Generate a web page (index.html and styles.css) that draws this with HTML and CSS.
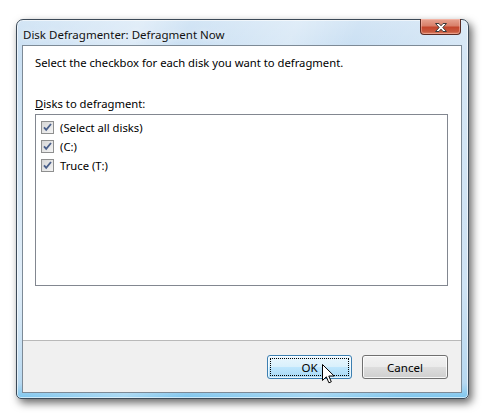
FILE: index.html
```html
<!DOCTYPE html>
<html>
<head>
<meta charset="utf-8">
<link rel="stylesheet" href="styles.css">
</head>
<body>
<div class="window">
  <div class="titlebar">
    <div class="title">Disk Defragmenter: Defragment Now</div>
    <div class="close">
      <svg width="18" height="11" viewBox="0 0 18 11">
        <path d="M3.5 1.5h3.5l2 2.3 2-2.3h3.5l-3.7 4 3.7 4h-3.5l-2-2.3-2 2.3h-3.5l3.7-4z" fill="#fff" stroke="#3b3b3b" stroke-width="1" stroke-linejoin="round"/>
      </svg>
    </div>
  </div>
  <div class="client">
    <div class="content">
      <div class="instr">Select the checkbox for each disk you want to defragment.</div>
      <div class="label"><u>D</u>isks to defragment:</div>
      <div class="list">
        <div class="row"><span class="cb"><svg width="13" height="13" viewBox="0 0 13 13"><path d="M3 6.3l2.2 2.6L10 3" fill="none" stroke="#4a5f8a" stroke-width="1.8"/></svg></span>(Select all disks)</div>
        <div class="row"><span class="cb"><svg width="13" height="13" viewBox="0 0 13 13"><path d="M3 6.3l2.2 2.6L10 3" fill="none" stroke="#4a5f8a" stroke-width="1.8"/></svg></span>(C:)</div>
        <div class="row"><span class="cb"><svg width="13" height="13" viewBox="0 0 13 13"><path d="M3 6.3l2.2 2.6L10 3" fill="none" stroke="#4a5f8a" stroke-width="1.8"/></svg></span>Truce (T:)</div>
      </div>
    </div>
    <div class="footer">
      <div class="btn ok"><span class="focus">OK</span></div>
      <div class="btn">Cancel</div>
    </div>
  </div>
  <svg class="cursor" width="14" height="22" viewBox="0 0 14 22">
    <path d="M0.5 0.5v16l3.8-3.7 2.6 6 2.4-1-2.5-5.8h5.3z" fill="#fff" stroke="#000" stroke-width="1" stroke-linejoin="round"/>
  </svg>
</div>
</body>
</html>
```
FILE: styles.css
```css
html, body {
  margin: 0;
  padding: 0;
  background: #fff;
}
body {
  width: 486px;
  height: 419px;
  overflow: hidden;
  font-family: "Noto Sans", "Open Sans", sans-serif;
  font-size: 11.25px;
  color: #000;
}
.window {
  position: relative;
  margin: 19px 0 0 16px;
  width: 453px;
  height: 380px;
  box-sizing: border-box;
  padding: 0 6px 5px 5px;
  border: 1px solid #3c4a58;
  border-radius: 7px 7px 5px 5px;
  background:
    linear-gradient(115deg, rgba(255,255,255,0) 0%, rgba(255,255,255,.35) 20%, rgba(255,255,255,0) 28%, rgba(255,255,255,.3) 45%, rgba(255,255,255,0) 55%, rgba(255,255,255,.25) 75%, rgba(255,255,255,0) 90%),
    linear-gradient(180deg, #d3e5f5 0%, #c7def2 10%, #cfe3f4 70%, #b7d8f0 96%, #7cc6ee 100%);
  box-shadow: 3px 4px 9px rgba(0,0,0,.6), inset 0 0 0 1px rgba(255,255,255,.6);
  display: flex;
  flex-direction: column;
}
.titlebar {
  height: 25px;
  flex: none;
  display: flex;
  justify-content: space-between;
  align-items: flex-start;
}
.title {
  padding: 7px 0 0 1px;
  line-height: 15px;
  font-size: 11.5px;
  color: #111;
  text-shadow: 0 0 6px rgba(255,255,255,.9);
}
.close {
  width: 41px;
  height: 16px;
  margin: -1px 1px 0 0;
  box-sizing: border-box;
  border: 1px solid #5a2a22;
  border-top: none;
  border-radius: 0 0 4px 4px;
  background: linear-gradient(180deg, #e8a592 0%, #d8806a 45%, #c4462c 55%, #c85a3f 85%, #e08a6a 100%);
  box-shadow: inset 0 0 0 1px rgba(255,200,190,.45);
  display: flex;
  align-items: center;
  justify-content: center;
}
.close svg { display: block; margin-top: 1px; }
.client {
  flex: 1;
  border: 1px solid #7d8a96;
  background: #fff;
  display: flex;
  flex-direction: column;
}
.content {
  flex: 1;
  padding: 9px 0 0 12px;
  display: flex;
  flex-direction: column;
}
.instr { line-height: 15px; }
.label { margin-top: 26px; line-height: 15px; }
.list {
  margin-top: 3px;
  width: 413px;
  height: 172px;
  box-sizing: border-box;
  border: 1px solid #828790;
  padding: 3px 0 0 5px;
}
.row {
  height: 19px;
  display: flex;
  align-items: center;
  gap: 6px;
  line-height: 15px;
}
.cb {
  width: 13px;
  height: 13px;
  box-sizing: border-box;
  border: 1px solid #8e8f8f;
  background: linear-gradient(135deg, #d6d6d6 0%, #f4f4f4 100%);
  position: relative;
  flex: none;
}
.cb svg { position: absolute; left: -1px; top: -1px; }
.footer {
  height: 52px;
  flex: none;
  border-top: 1px solid #b9b9b9;
  background: #f0f0f0;
  display: flex;
  justify-content: flex-end;
  align-items: flex-start;
  gap: 10px;
  padding: 14px 13px 0 0;
  box-sizing: border-box;
}
.btn {
  width: 86px;
  height: 24px;
  box-sizing: border-box;
  border: 1px solid #707070;
  border-radius: 3px;
  background: linear-gradient(180deg, #f2f2f2 0%, #ebebeb 48%, #dddddd 52%, #cfcfcf 100%);
  box-shadow: inset 0 0 0 1px rgba(255,255,255,.8);
  display: flex;
  align-items: center;
  justify-content: center;
  line-height: 15px;
  font-size: 11.5px;
}
.btn.ok {
  width: 85px;
  border-color: #3c7fb1;
  background: linear-gradient(180deg, #eaf6fd 0%, #d9f0fc 48%, #bee6fd 52%, #a7d9f5 100%);
  box-shadow: inset 0 0 0 1px rgba(255,255,255,.7);
  padding: 2px;
}
.focus {
  flex: 1;
  align-self: stretch;
  border: 1px dotted #000;
  display: flex;
  align-items: center;
  justify-content: center;
}
.cursor {
  position: absolute;
  left: 305px;
  top: 344px;
}
```
